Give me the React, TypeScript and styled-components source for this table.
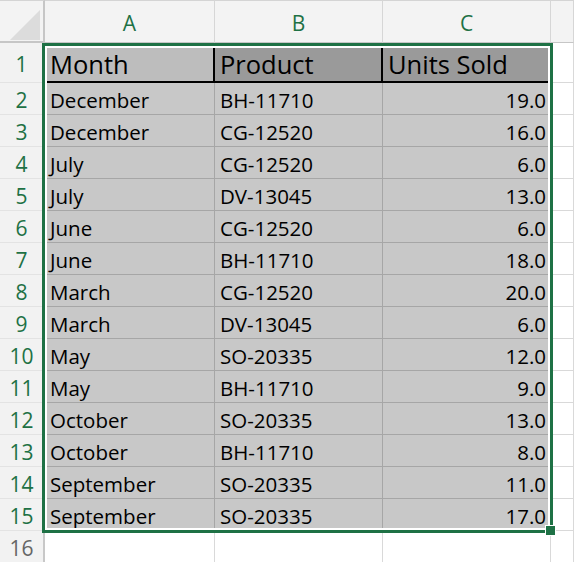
import React from "react";
import styled, { createGlobalStyle, css } from "styled-components";

const GREEN = "#1e7145";

const GlobalStyle = createGlobalStyle`
  html, body { margin: 0; padding: 0; background: #ffffff; overflow: hidden; }
  body { font-family: "Open Sans", "Noto Sans", sans-serif; }
`;

const Sheet = styled.div`
  position: relative;
  display: grid;
  grid-template-columns: 45px 170px 168px 168px 23px;
  grid-template-rows: 43px 40px repeat(14, 32px) 32px;
  width: 574px;
  height: 562px;
  overflow: hidden;
  font-family: "Open Sans", "Noto Sans", sans-serif;
`;

const Corner = styled.div`
  position: relative;
  box-sizing: border-box;
  background: #f3f3f3;
  border-top: 1px solid #d4d4d4;
  border-right: 2px solid #c6c6c6;
  border-bottom: 2px solid #c6c6c6;
`;

const CornerMark = styled.svg`
  position: absolute;
  left: 10px;
  top: 9px;
`;

const ColHead = styled.div<{ $active?: boolean }>`
  box-sizing: border-box;
  display: flex;
  align-items: center;
  justify-content: center;
  background: #f3f3f3;
  border-top: 1px solid #d4d4d4;
  border-right: 1px solid #d6d6d6;
  border-bottom: 1px solid #c6c6c6;
  color: ${(p) => (p.$active ? GREEN : "#666")};
  font-size: 21px;
  font-weight: 500;
  padding-top: 2px;
`;

const RowHead = styled.div<{ $active?: boolean }>`
  box-sizing: border-box;
  display: flex;
  align-items: center;
  justify-content: center;
  background: #f2f2f2;
  border-bottom: 1px solid #e3e3e3;
  border-right: 2px solid #c8c8c8;
  color: ${(p) => (p.$active ? GREEN : "#666")};
  font-size: 21px;
  font-weight: 500;
  padding-top: 2px;
`;

type Tone = "title" | "titleDark" | "data" | "blank";

const toneStyles: Record<Tone, ReturnType<typeof css>> = {
  title: css`
    background: #bdbdbd;
    border-bottom: 2px solid #000;
    border-right: 2px solid #000;
    font-size: 25.5px;
    padding-top: 4px;
  `,
  titleDark: css`
    background: #9a9a9a;
    border-bottom: 2px solid #000;
    border-right: 2px solid #000;
    font-size: 25.5px;
    padding-top: 4px;
  `,
  data: css`
    background: #c8c8c8;
    border-bottom: 1px solid #a6a6a6;
    border-right: 1px solid #a6a6a6;
    font-size: 20.5px;
    padding-top: 3px;
  `,
  blank: css`
    background: #ffffff;
    border-bottom: 1px solid #d9d9d9;
    border-right: 1px solid #d9d9d9;
  `,
};

const Cell = styled.div<{ $tone: Tone; $right?: boolean }>`
  box-sizing: border-box;
  display: flex;
  align-items: center;
  justify-content: ${(p) => (p.$right ? "flex-end" : "flex-start")};
  padding-left: 5px;
  padding-right: 4px;
  color: #000;
  font-weight: 500;
  white-space: nowrap;
  overflow: hidden;
  ${(p) => toneStyles[p.$tone]}
`;

const Selection = styled.div`
  position: absolute;
  left: 42px;
  top: 43px;
  width: 511px;
  height: 490px;
  box-sizing: border-box;
  border: 3px solid ${GREEN};
  box-shadow: inset 0 0 0 2px #ffffff;
  pointer-events: none;
`;

const FillHandle = styled.div`
  position: absolute;
  left: 546px;
  top: 526px;
  width: 9px;
  height: 9px;
  box-sizing: border-box;
  background: ${GREEN};
  outline: 1px solid #ffffff;
`;

const rows: [string, string, string][] = [
  ["December", "BH-11710", "19.0"],
  ["December", "CG-12520", "16.0"],
  ["July", "CG-12520", "6.0"],
  ["July", "DV-13045", "13.0"],
  ["June", "CG-12520", "6.0"],
  ["June", "BH-11710", "18.0"],
  ["March", "CG-12520", "20.0"],
  ["March", "DV-13045", "6.0"],
  ["May", "SO-20335", "12.0"],
  ["May", "BH-11710", "9.0"],
  ["October", "SO-20335", "13.0"],
  ["October", "BH-11710", "8.0"],
  ["September", "SO-20335", "11.0"],
  ["September", "SO-20335", "17.0"],
];

export default function App() {
  return (
    <>
      <GlobalStyle />
      <Sheet>
        <Corner>
          <CornerMark width="31" height="30" viewBox="0 0 31 30">
            <polygon points="30,0 30,30 0,30" fill="#dcdcdc" />
          </CornerMark>
        </Corner>
        <ColHead $active>A</ColHead>
        <ColHead $active>B</ColHead>
        <ColHead $active>C</ColHead>
        <ColHead />

        <RowHead $active>1</RowHead>
        <Cell $tone="title">Month</Cell>
        <Cell $tone="titleDark">Product</Cell>
        <Cell $tone="titleDark">Units Sold</Cell>
        <Cell $tone="blank" />

        {rows.map((r, i) => (
          <React.Fragment key={i}>
            <RowHead $active>{i + 2}</RowHead>
            <Cell $tone="data">{r[0]}</Cell>
            <Cell $tone="data">{r[1]}</Cell>
            <Cell $tone="data" $right>
              {r[2]}
            </Cell>
            <Cell $tone="blank" />
          </React.Fragment>
        ))}

        <RowHead>16</RowHead>
        <Cell $tone="blank" />
        <Cell $tone="blank" />
        <Cell $tone="blank" />
        <Cell $tone="blank" />

        <Selection />
        <FillHandle />
      </Sheet>
    </>
  );
}
